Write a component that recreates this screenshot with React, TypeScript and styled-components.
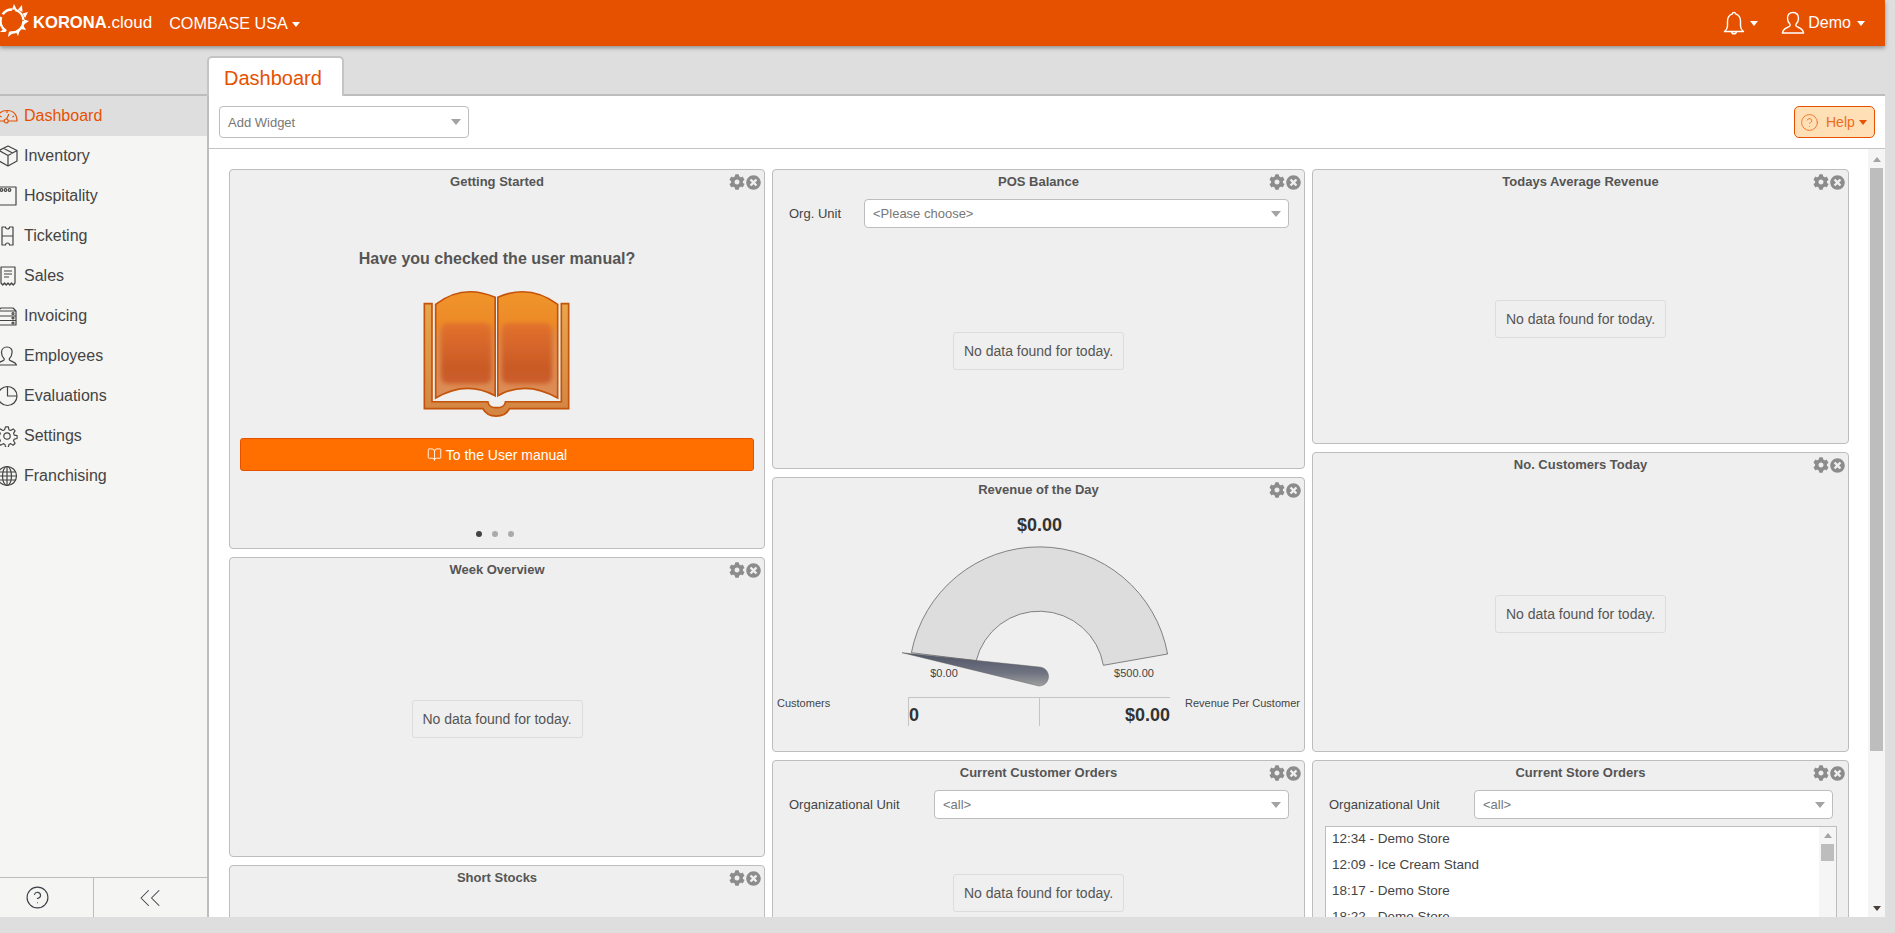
import { ReactNode } from 'react';
import styled, { createGlobalStyle } from 'styled-components';
import { BookOpen, ChevronsLeft, CircleHelp } from 'lucide-react';
import { FaCog, FaTimesCircle } from 'react-icons/fa';

const GlobalStyle = createGlobalStyle`
    html, body {
        margin: 0;
        height: 100%;
        overflow: hidden;
        background: #dedede;
        font-family: "Liberation Sans", Arial, sans-serif;
        color: #444;
    }
    * {
        box-sizing: border-box;
    }
`;

const Page = styled.div`
    display: flex;
    flex-direction: column;
    width: 1885px;
    height: 917px;
`;

const Header = styled.header`
    position: relative;
    z-index: 2;
    flex: none;
    display: flex;
    align-items: center;
    height: 46px;
    background: #e65100;
    color: #fff;
    box-shadow: 0 2px 4px rgba(0, 0, 0, 0.35);
`;

const LogoMark = styled.svg`
    flex: none;
    width: 36px;
    height: 36px;
    margin: -5px 3px 0 -6px;
`;

const LogoText = styled.span`
    font-size: 17px;
    b {
        font-size: 16.6px;
    }
`;

const Company = styled.span`
    margin-left: 17px;
    font-size: 16.2px;
`;

const Caret = styled.span<{ $size?: number; $gap?: number; $color?: string }>`
    display: inline-block;
    width: 0;
    height: 0;
    margin-left: ${props => props.$gap ?? 4}px;
    border-left: ${props => props.$size ?? 4}px solid transparent;
    border-right: ${props => props.$size ?? 4}px solid transparent;
    border-top: ${props => (props.$size ?? 4) + 1}px solid ${props => props.$color ?? '#fff'};
    vertical-align: 2px;
`;

const HeaderRight = styled.div`
    display: flex;
    align-items: center;
    margin-left: auto;
    padding-right: 20px;
    font-size: 16px;
`;

const BellGroup = styled.div`
    display: flex;
    align-items: center;
    margin-right: 23px;
`;

const UserGroup = styled.div`
    display: flex;
    align-items: center;
    gap: 3px;
`;

const TabBar = styled.div`
    flex: none;
    display: flex;
    align-items: flex-end;
    height: 48px;
    padding-left: 207px;
`;

const Tab = styled.div`
    position: relative;
    z-index: 1;
    width: 137px;
    height: 40px;
    margin-bottom: -2px;
    padding: 8px 0 0 15px;
    background: #fff;
    border: 2px solid #c4c4c4;
    border-bottom: none;
    border-radius: 5px 5px 0 0;
    font-size: 20px;
    line-height: 24px;
    color: #e65100;
`;

const Main = styled.div`
    flex: 1;
    display: flex;
    min-height: 0;
    border-top: 2px solid #bdbdbd;
`;

const Sidebar = styled.nav`
    flex: none;
    display: flex;
    flex-direction: column;
    width: 209px;
    background: #f5f5f3;
    border-right: 2px solid #bdbdbd;
`;

const MenuItem = styled.div<{ $active?: boolean }>`
    display: flex;
    align-items: center;
    gap: 6px;
    height: 40px;
    font-size: 16px;
    overflow: hidden;
    background: ${props => (props.$active ? '#dedede' : 'transparent')};
    color: ${props => (props.$active ? '#e65100' : '#444')};
`;

const MenuIcon = styled.svg`
    flex: none;
    width: 22px;
    height: 22px;
    margin-left: -4px;
    fill: none;
    stroke: currentColor;
    stroke-width: 1.2;
    stroke-linejoin: round;
`;

const SidebarFooter = styled.div`
    display: flex;
    height: 40px;
    margin-top: auto;
    border-top: 1px solid #bdbdbd;
    color: #3d4048;
`;

const FooterHelp = styled.div`
    flex: none;
    display: flex;
    align-items: center;
    justify-content: center;
    width: 94px;
    padding-right: 19px;
    border-right: 1px solid #bdbdbd;
`;

const FooterCollapse = styled.div`
    flex: 1;
    display: flex;
    align-items: center;
    justify-content: center;
    padding-right: 2px;
`;

const Content = styled.div`
    flex: 1;
    display: flex;
    flex-direction: column;
    min-width: 0;
    background: #fff;
`;

const Toolbar = styled.div`
    flex: none;
    display: flex;
    align-items: center;
    justify-content: space-between;
    height: 53px;
    padding: 0 10px;
    border-bottom: 1px solid #c4c4c4;
`;

const SelectBox = styled.div<{ $width: number; $height?: number }>`
    display: flex;
    align-items: center;
    justify-content: space-between;
    width: ${props => props.$width}px;
    height: ${props => props.$height ?? 29}px;
    padding: 0 7px 0 8px;
    background: #fff;
    border: 1px solid #bdbdbd;
    border-radius: 4px;
    font-size: 13px;
    color: #777;
`;

const HelpButton = styled.div`
    display: flex;
    align-items: center;
    gap: 7px;
    width: 81px;
    height: 32px;
    padding-left: 5px;
    background: #fedfb6;
    border: 1px solid #e65100;
    border-radius: 5px;
    font-size: 14px;
    color: #ef6c1a;
`;

const ScrollArea = styled.div`
    flex: 1;
    display: flex;
    min-height: 0;
`;

const Board = styled.div`
    flex: 1;
    display: flex;
    gap: 7px;
    min-width: 0;
    padding: 20px 0 0 20px;
    overflow: hidden;
`;

const Column = styled.div<{ $width: number }>`
    flex: none;
    display: flex;
    flex-direction: column;
    gap: 8px;
    width: ${props => props.$width}px;
`;

const CardBox = styled.section<{ $height: number }>`
    position: relative;
    flex: none;
    display: flex;
    flex-direction: column;
    height: ${props => props.$height}px;
    background: #efefef;
    border: 1px solid #bdbdbd;
    border-radius: 4px;
`;

const CardTitle = styled.h3`
    flex: none;
    height: 24px;
    margin: 0;
    padding-top: 4px;
    font-size: 13px;
    line-height: 16px;
    font-weight: bold;
    text-align: center;
    color: #555;
`;

const CardActions = styled.div`
    position: absolute;
    top: 4px;
    right: 3px;
    display: flex;
    align-items: center;
    gap: 1px;
    color: #8c8c8c;
`;

const CardBody = styled.div<{ $belowForm?: boolean }>`
    flex: 1;
    display: flex;
    align-items: center;
    justify-content: center;
    min-height: 0;
    padding-top: ${props => (props.$belowForm ? 6 : 0)}px;
`;

const NoData = styled.div`
    width: 171px;
    height: 38px;
    border: 1px solid #dcdcdc;
    border-radius: 3px;
    font-size: 14px;
    line-height: 36px;
    text-align: center;
    color: #555;
`;

const FormRow = styled.div<{ $labelWidth: number }>`
    flex: none;
    display: grid;
    grid-template-columns: ${props => props.$labelWidth}px 1fr;
    align-items: center;
    margin-top: 5px;
    padding: 0 16px;
    font-size: 13px;
    color: #444;
`;

const GettingStarted = styled.div`
    display: flex;
    flex-direction: column;
    align-items: center;
`;

const Question = styled.div`
    margin-top: 56px;
    font-size: 16px;
    line-height: 18px;
    font-weight: bold;
    color: #555;
`;

const BookPicture = styled.svg`
    display: block;
    width: 148px;
    height: 128px;
    margin-top: 22px;
`;

const ManualButton = styled.div`
    display: flex;
    align-items: center;
    justify-content: center;
    gap: 4px;
    width: 514px;
    height: 33px;
    margin-top: 20px;
    background: #ff6f00;
    border: 1px solid #e65100;
    border-radius: 3px;
    font-size: 14px;
    color: #fff;
`;

const Dots = styled.div`
    display: flex;
    gap: 10px;
    margin-top: 60px;
    padding-right: 5px;
`;

const Dot = styled.span<{ $on?: boolean }>`
    width: 6px;
    height: 6px;
    border-radius: 50%;
    background: ${props => (props.$on ? '#444' : '#aaa')};
`;

const RevenueValue = styled.div`
    margin-top: 12px;
    padding-left: 2px;
    font-size: 18px;
    line-height: 22px;
    font-weight: bold;
    text-align: center;
    color: #333;
`;

const Gauge = styled.svg`
    display: block;
    width: 300px;
    height: 150px;
    margin: 9px auto 0;
`;

const StatsRow = styled.div`
    display: grid;
    grid-template-columns: 131px 262px 1fr;
    margin-top: 2px;
    padding: 0 4px;
    font-size: 11px;
    color: #444;
`;

const StatLabel = styled.div<{ $right?: boolean }>`
    line-height: 13px;
    text-align: ${props => (props.$right ? 'right' : 'left')};
`;

const StatBox = styled.div`
    display: grid;
    grid-template-columns: 130px 1fr;
    height: 29px;
    border-top: 1px solid #c4c4c4;
    border-left: 1px solid #c4c4c4;
    font-size: 18px;
    font-weight: bold;
    color: #333;
`;

const StatCell = styled.div<{ $right?: boolean }>`
    padding-top: 6px;
    line-height: 22px;
    text-align: ${props => (props.$right ? 'right' : 'left')};
    border-left: ${props => (props.$right ? '1px solid #c4c4c4' : 'none')};
`;

const OrderList = styled.div`
    flex: 1;
    display: flex;
    margin: 7px 11px 10px 12px;
    background: #fff;
    border: 1px solid #bdbdbd;
    overflow: hidden;
`;

const OrderItems = styled.div`
    flex: 1;
    padding-left: 6px;
    font-size: 13.5px;
    color: #444;
`;

const OrderItem = styled.div`
    height: 26px;
    line-height: 24px;
`;

const BarTrack = styled.div<{ $pad: number }>`
    flex: none;
    display: flex;
    flex-direction: column;
    align-items: center;
    width: 17px;
    padding-top: ${props => props.$pad}px;
    background: #f5f5f5;
`;

const BarArrow = styled.div<{ $down?: boolean; $color?: string }>`
    flex: none;
    display: flex;
    align-items: center;
    justify-content: center;
    height: 17px;
    &::before {
        content: '';
        border-left: 4px solid transparent;
        border-right: 4px solid transparent;
        ${props => (props.$down ? 'border-top' : 'border-bottom')}: 5px solid ${props => props.$color ?? '#a3a3a3'};
    }
`;

const BarThumb = styled.div<{ $height: number }>`
    flex: none;
    width: 13px;
    height: ${props => props.$height}px;
    background: #bdbdbd;
`;

const BarSpacer = styled.div`
    flex: 1;
`;

type CardProps = { title: string; height: number; children?: ReactNode };

const Card = ({ title, height, children }: CardProps) => (
    <CardBox $height={height}>
        <CardTitle>{title}</CardTitle>
        <CardActions>
            <FaCog size={16} />
            <FaTimesCircle size={15} />
        </CardActions>
        {children}
    </CardBox>
);

const Empty = ({ belowForm }: { belowForm?: boolean }) => (
    <CardBody $belowForm={belowForm}>
        <NoData>No data found for today.</NoData>
    </CardBody>
);

const Select = ({ text, width, height }: { text: string; width: number; height?: number }) => (
    <SelectBox $width={width} $height={height}>
        {text}
        <Caret $size={5} $gap={0} $color="#a3a3a3" />
    </SelectBox>
);

const Logo = () => (
    <LogoMark viewBox="0 0 36 36">
        <circle cx="18" cy="18" r="11.5" fill="none" stroke="#fff" strokeWidth="2.4" strokeDasharray="20 4 16 3 11 3 14 3" />
        <path
            d="M20 1l3 6-5-.5zM28 2l.5 7-4.500-2.500zM34 9l-3 6-2.500-4.500zM35 18l-5 3.500v-5zM32 27l-5.500-1 2.500-4zM24 33l-2.500-5 4.500-1.500zM14 34l1-5.500 4 1.500zM6 29l4-3.500 1.500 3.500z"
            fill="#fff"
        />
    </LogoMark>
);

const BellIcon = () => (
    <svg width="24" height="24" viewBox="0 0 24 24" fill="none" stroke="currentColor" strokeWidth="1.4" strokeLinejoin="round">
        <path d="M12 1.500c-1 0-1.800.8-1.800 1.600C7.200 4 5.500 6.500 5.500 10v5c0 2.500-1.200 4-3 5.500h19c-1.800-1.500-3-3-3-5.500v-5c0-3.500-1.700-6-4.700-6.900 0-.8-.8-1.600-1.800-1.600z" />
        <path d="M9.500 20.500c.3 1.500 1.200 2.300 2.500 2.300s2.200-.8 2.500-2.300" />
    </svg>
);

const UserIcon = () => (
    <svg width="24" height="24" viewBox="0 0 24 24" fill="none" stroke="currentColor" strokeWidth="1.4" strokeLinejoin="round">
        <path d="M12 1.500c-3.600 0-5.500 2.600-5.500 5.800 0 2.400 1 4.600 2.500 6 .4.600.2 1.700-.6 2.200-2 1.200-6.400 1.800-7 6.500h21.200c-.6-4.700-5-5.300-7-6.500-.8-.5-1-1.600-.6-2.200 1.500-1.400 2.500-3.600 2.500-6 0-3.200-1.900-5.800-5.500-5.800z" />
    </svg>
);

const menu: { label: string; icon: ReactNode; active?: boolean }[] = [
    {
        label: 'Dashboard',
        active: true,
        icon: (
            <>
                <path d="M1 16C1 9 5 5.500 11 5.500S21 9 21 16H12.500M8 16H1" />
                <circle cx="10.200" cy="16" r="2" />
                <path d="M10.500 14L13 9M4 11l1.500 1M18 11l-1.500 1M11 6v2" />
            </>
        ),
    },
    {
        label: 'Inventory',
        icon: <path d="M12 1L21 5.500V16L12 21 3 16V5.500ZM3 5.500L12 10.500 21 5.500M12 10.500V21M7.500 3.300L16.500 8" />,
    },
    {
        label: 'Hospitality',
        icon: (
            <>
                <path d="M0 2H20V20H0" />
                <circle cx="5.500" cy="5" r="1.300" />
                <circle cx="9.500" cy="5" r="1.300" />
                <circle cx="13.500" cy="5" r="1.300" />
            </>
        ),
    },
    {
        label: 'Ticketing',
        icon: <path d="M6 2h3.500a2 2 0 0 0 4 0H17V20h-3.500a2 2 0 0 0-4 0H6ZM6 11h11" />,
    },
    {
        label: 'Sales',
        icon: (
            <>
                <path d="M5 2h14v16l-1.750 2-1.750-2-1.750 2-1.750-2-1.750 2-1.750-2-1.750 2L5 18z" />
                <path d="M8 6h8M8 9h8M8 12h5" />
            </>
        ),
    },
    {
        label: 'Invoicing',
        icon: (
            <>
                <path d="M2 6l3-3h12l3 3v5H2zM2 11h18v9H2zM2 6h18M2 15.500h18" />
                <circle cx="17" cy="8.500" r="1" />
                <circle cx="17" cy="13" r="1" />
                <circle cx="17" cy="18" r="1" />
            </>
        ),
    },
    {
        label: 'Employees',
        icon: (
            <path d="M11 2c-3.500 0-5.500 2.500-5.500 5.500 0 2.500 1 4.500 2.500 6 .4.700.2 1.500-.6 2-2 1.200-5.400 1.500-6.400 4.500h19.500c-1-3-4.400-3.300-6.400-4.500-.8-.5-1-1.300-.6-2 1.500-1.500 2.500-3.500 2.500-6C16.500 4.500 14.500 2 11 2z" />
        ),
    },
    {
        label: 'Evaluations',
        icon: (
            <>
                <circle cx="11.500" cy="11" r="9.500" />
                <path d="M11.500 1.500V11H21" />
            </>
        ),
    },
    {
        label: 'Settings',
        icon: (
            <>
                <path
                    d="M9.500 1.500h3l.6 3 1.800.8 2.600-1.700 2.100 2.100-1.700 2.600.8 1.800 3 .6v3l-3 .6-.8 1.800 1.700 2.600-2.100 2.100-2.600-1.700-1.800.8-.6 3h-3l-.6-3-1.800-.8-2.600 1.700-2.100-2.100 1.700-2.600-.8-1.800-3-.6v-3l3-.6.8-1.800L2 5.700l2.100-2.100 2.600 1.700 1.800-.8z"
                    transform="translate(.5 .5) scale(.95)"
                />
                <circle cx="11" cy="11" r="3.200" />
            </>
        ),
    },
    {
        label: 'Franchising',
        icon: (
            <>
                <circle cx="11" cy="11" r="9.500" />
                <ellipse cx="11" cy="11" rx="4.500" ry="9.500" />
                <path d="M11 1.500v19M2.500 7h17M2.500 15h17M1.500 11h19" />
            </>
        ),
    },
];

const orders = ['12:34 - Demo Store', '12:09 - Ice Cream Stand', '18:17 - Demo Store', '18:22 - Demo Store'];

const App = () => (
    <>
        <GlobalStyle />
        <Page>
            <Header>
                <Logo />
                <LogoText>
                    <b>KORONA</b>.cloud
                </LogoText>
                <Company>
                    COMBASE USA
                    <Caret />
                </Company>
                <HeaderRight>
                    <BellGroup>
                        <BellIcon />
                        <Caret $gap={4} />
                    </BellGroup>
                    <UserGroup>
                        <UserIcon />
                        <span>Demo</span>
                        <Caret $gap={3} />
                    </UserGroup>
                </HeaderRight>
            </Header>
            <TabBar>
                <Tab>Dashboard</Tab>
            </TabBar>
            <Main>
                <Sidebar>
                    {menu.map(item => (
                        <MenuItem key={item.label} $active={item.active}>
                            <MenuIcon viewBox="0 0 22 22">{item.icon}</MenuIcon>
                            {item.label}
                        </MenuItem>
                    ))}
                    <SidebarFooter>
                        <FooterHelp>
                            <CircleHelp size={25} strokeWidth={1.1} />
                        </FooterHelp>
                        <FooterCollapse>
                            <ChevronsLeft size={36} strokeWidth={0.7} />
                        </FooterCollapse>
                    </SidebarFooter>
                </Sidebar>
                <Content>
                    <Toolbar>
                        <Select text="Add Widget" width={250} height={32} />
                        <HelpButton>
                            <CircleHelp size={19} strokeWidth={1.1} />
                            Help
                            <Caret $size={4.5} $gap={-3} $color="#e65100" />
                        </HelpButton>
                    </Toolbar>
                    <ScrollArea>
                        <Board>
                            <Column $width={536}>
                                <Card title="Getting Started" height={380}>
                                    <GettingStarted>
                                        <Question>Have you checked the user manual?</Question>
                                        <BookPicture viewBox="70 60 445 385">
                                            <defs>
                                                <linearGradient id="page" x1="0" y1="0" x2="0" y2="1">
                                                    <stop offset="0" stopColor="#f0952a" />
                                                    <stop offset="0.3" stopColor="#ec8a28" />
                                                    <stop offset="0.42" stopColor="#e08a45" />
                                                    <stop offset="1" stopColor="#dc8c58" />
                                                </linearGradient>
                                                <linearGradient id="pageCore" x1="0" y1="0" x2="0" y2="1">
                                                    <stop offset="0" stopColor="#e2722a" />
                                                    <stop offset="0.75" stopColor="#c95a28" />
                                                    <stop offset="1" stopColor="#cc5e2a" />
                                                </linearGradient>
                                                <linearGradient id="cover" x1="0" y1="0" x2="0" y2="1">
                                                    <stop offset="0" stopColor="#e8a64c" />
                                                    <stop offset="1" stopColor="#d38443" />
                                                </linearGradient>
                                                <filter id="soft" x="-30%" y="-30%" width="160%" height="160%">
                                                    <feGaussianBlur stdDeviation="7" />
                                                </filter>
                                            </defs>
                                            <path
                                                d="M74 101H97V396H265C267 420 316 420 318 396H486V101H508V417H330C315 447 265 447 250 417H74Z"
                                                fill="url(#cover)"
                                                stroke="#c4530a"
                                                strokeWidth="5"
                                            />
                                            <path d="M108 103Q190 40 287 82V378Q200 330 108 385Z" fill="url(#page)" />
                                            <path d="M295 82Q390 40 475 103V385Q380 330 295 378Z" fill="url(#page)" />
                                            <rect x="124" y="160" width="152" height="182" rx="20" fill="url(#pageCore)" filter="url(#soft)" />
                                            <rect x="306" y="160" width="152" height="182" rx="20" fill="url(#pageCore)" filter="url(#soft)" />
                                            <path d="M108 103Q190 40 287 82V378Q200 330 108 385Z" fill="none" stroke="#c4530a" strokeWidth="5" />
                                            <path d="M295 82Q390 40 475 103V385Q380 330 295 378Z" fill="none" stroke="#c4530a" strokeWidth="5" />
                                        </BookPicture>
                                        <ManualButton>
                                            <BookOpen size={15} strokeWidth={1.4} />
                                            To the User manual
                                        </ManualButton>
                                        <Dots>
                                            <Dot $on />
                                            <Dot />
                                            <Dot />
                                        </Dots>
                                    </GettingStarted>
                                </Card>
                                <Card title="Week Overview" height={300}>
                                    <Empty />
                                </Card>
                                <Card title="Short Stocks" height={200} />
                            </Column>
                            <Column $width={533}>
                                <Card title="POS Balance" height={300}>
                                    <FormRow $labelWidth={75}>
                                        Org. Unit
                                        <Select text="<Please choose>" width={425} />
                                    </FormRow>
                                    <Empty belowForm />
                                </Card>
                                <Card title="Revenue of the Day" height={275}>
                                    <RevenueValue>$0.00</RevenueValue>
                                    <Gauge viewBox="889 545 300 150">
                                        <defs>
                                            <linearGradient id="needle" x1="0" y1="0" x2="0" y2="1">
                                                <stop offset="0" stopColor="#4e5366" />
                                                <stop offset="0.6" stopColor="#6f7280" />
                                                <stop offset="1" stopColor="#a0a0a0" />
                                            </linearGradient>
                                        </defs>
                                        <path
                                            d="M911.400 652.700A130.300 130.300 0 0 1 1167.600 654L1103.400 665.300A65 65 0 0 0 976.200 660.700Z"
                                            fill="#dddddd"
                                            stroke="#666"
                                            strokeWidth="0.8"
                                        />
                                        <path
                                            d="M902 652.700L1039 667C1044 667 1048.500 671 1048.500 676.500C1048.500 682 1044 686 1039 686Z"
                                            fill="url(#needle)"
                                            stroke="#666"
                                            strokeWidth="0.5"
                                        />
                                        <text x="944" y="677" fontSize="11" fill="#444" textAnchor="middle">
                                            $0.00
                                        </text>
                                        <text x="1134" y="677" fontSize="11" fill="#444" textAnchor="middle">
                                            $500.00
                                        </text>
                                    </Gauge>
                                    <StatsRow>
                                        <StatLabel>Customers</StatLabel>
                                        <StatBox>
                                            <StatCell>0</StatCell>
                                            <StatCell $right>$0.00</StatCell>
                                        </StatBox>
                                        <StatLabel $right>Revenue Per Customer</StatLabel>
                                    </StatsRow>
                                </Card>
                                <Card title="Current Customer Orders" height={202}>
                                    <FormRow $labelWidth={145}>
                                        Organizational Unit
                                        <Select text="<all>" width={355} />
                                    </FormRow>
                                    <Empty belowForm />
                                </Card>
                            </Column>
                            <Column $width={537}>
                                <Card title="Todays Average Revenue" height={275}>
                                    <Empty />
                                </Card>
                                <Card title="No. Customers Today" height={300}>
                                    <Empty />
                                </Card>
                                <Card title="Current Store Orders" height={202}>
                                    <FormRow $labelWidth={145}>
                                        Organizational Unit
                                        <Select text="<all>" width={359} />
                                    </FormRow>
                                    <OrderList>
                                        <OrderItems>
                                            {orders.map((order, i) => (
                                                <OrderItem key={i}>{order}</OrderItem>
                                            ))}
                                        </OrderItems>
                                        <BarTrack $pad={0}>
                                            <BarArrow />
                                            <BarThumb $height={17} />
                                        </BarTrack>
                                    </OrderList>
                                </Card>
                            </Column>
                        </Board>
                        <BarTrack $pad={2}>
                            <BarArrow />
                            <BarThumb $height={583} />
                            <BarSpacer />
                            <BarArrow $down $color="#4a3f3a" />
                        </BarTrack>
                    </ScrollArea>
                </Content>
            </Main>
        </Page>
    </>
);

export default App;
